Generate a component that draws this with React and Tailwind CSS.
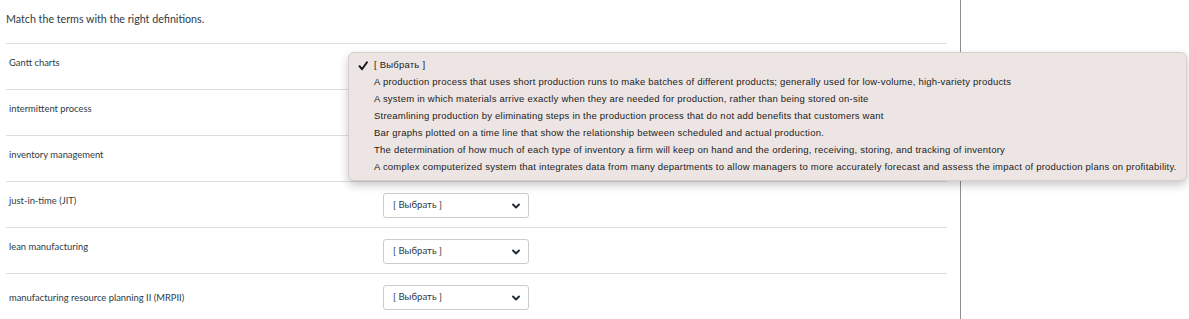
import { ChevronDown } from 'lucide-react'

const terms = [
  'Gantt charts',
  'intermittent process',
  'inventory management',
  'just-in-time (JIT)',
  'lean manufacturing',
  'manufacturing resource planning II (MRPII)',
]

const options = [
  'A production process that uses short production runs to make batches of different products; generally used for low-volume, high-variety products',
  'A system in which materials arrive exactly when they are needed for production, rather than being stored on-site',
  'Streamlining production by eliminating steps in the production process that do not add benefits that customers want',
  'Bar graphs plotted on a time line that show the relationship between scheduled and actual production.',
  'The determination of how much of each type of inventory a firm will keep on hand and the ordering, receiving, storing, and tracking of inventory',
  'A complex computerized system that integrates data from many departments to allow managers to more accurately forecast and assess the impact of production plans on profitability.',
]

function SelectBox({ hidden }) {
  return (
    <div className={`w-[146px] h-[25px] border border-[#c7cdd1] rounded-[3px] bg-white flex items-center justify-between pl-[9px] pr-[6px] ${hidden ? 'invisible' : ''}`}>
      <span className="text-[9.6px] text-[#2d3b45]">[ Выбрать ]</span>
      <ChevronDown size={12} strokeWidth={3.8} className="text-[#1f2a33]" />
    </div>
  )
}

// rows 1-3 are covered by the open menu
function MatchRow({ term, last, covered }) {
  return (
    <div className="flex h-[46px] pt-[11px] border-t border-[#dcdfe1]">
      <div className={`w-[377px] pl-[3px] text-[9.4px] text-[#2d3b45] ${last ? 'pt-[6px]' : 'pt-[1px]'}`}>{term}</div>
      <SelectBox hidden={covered} />
    </div>
  )
}

export default function App() {
  return (
    <div className="relative w-[1189px] h-[319px] overflow-hidden bg-white font-['Lato','Noto_Sans',sans-serif]">
      <div className="flex h-full">
        <div className="w-[961px] border-r border-[#8f8f8f] pl-[6px] pr-[13px]">
          <div className="h-[43px] pt-[11px] text-[10.7px] text-[#2d3b45]">Match the terms with the right definitions.</div>
          {terms.map((t, i) => (
            <MatchRow key={t} term={t} last={i === terms.length - 1} covered={i < 3} />
          ))}
        </div>
        <div className="flex-1" />
      </div>

      {/* open dropdown for first select */}
      <div className="absolute left-[348px] top-[52px] w-[839px] h-[129px] rounded-[6px] bg-[#ede5e3] border border-[#d6cfcd] shadow-[0_4px_10px_rgba(0,0,0,0.22)] pt-[4px] font-['Liberation_Sans','Helvetica',sans-serif] text-[9.5px] text-[#222]">
        <div className="h-[17px] flex items-center tracking-[0.22px]">
          <svg width="16" height="10" viewBox="0 0 16 10" className="ml-[9px]">
            <path d="M1.5 5.2 L4 8.2 L9 1.2" fill="none" stroke="#111" strokeWidth="1.9" strokeLinecap="round" strokeLinejoin="round" />
          </svg>
          <span>[ Выбрать ]</span>
        </div>
        {options.map(o => (
          <div key={o} className="h-[17px] flex items-center pl-[25px] tracking-[0.22px] whitespace-nowrap">{o}</div>
        ))}
      </div>
    </div>
  )
}
